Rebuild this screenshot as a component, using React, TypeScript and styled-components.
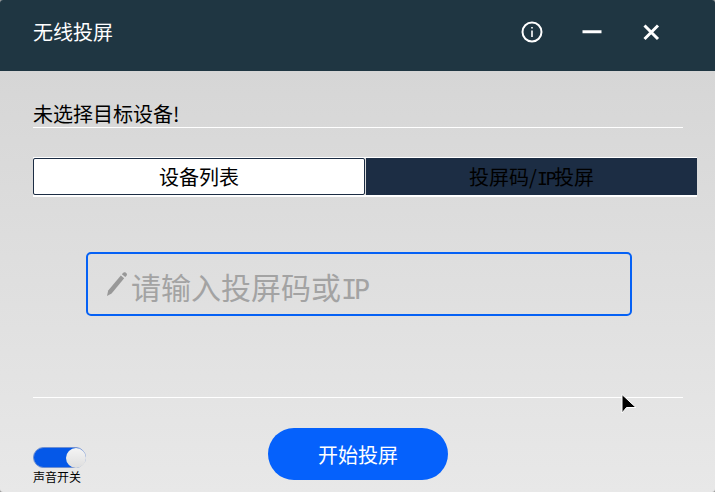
import styled, { createGlobalStyle } from 'styled-components'

const GlobalStyle = createGlobalStyle`
  html, body {
    margin: 0;
    padding: 0;
    background: #9a9a9a;
  }
  #root {
    width: 715px;
    height: 492px;
    overflow: hidden;
  }
`

const FONT = `"Noto Sans CJK SC", "Noto Sans", sans-serif`

const Window = styled.div`
  position: relative;
  display: flex;
  flex-direction: column;
  width: 715px;
  height: 492px;
  border-radius: 3px;
  overflow: hidden;
  background: linear-gradient(180deg, #d3d3d3 0%, #e8e8e8 100%);
  font-family: ${FONT};
  color: #000;
`

const TitleBar = styled.div`
  display: flex;
  align-items: center;
  justify-content: space-between;
  flex: none;
  height: 71px;
  padding: 0 52px 0 33px;
  box-sizing: border-box;
  background: #1f3642;
  color: #fff;
`

const TitleText = styled.div`
  font-size: 20px;
  line-height: 64px;
  margin-top: -7px;
`

const TitleButtons = styled.div`
  display: flex;
  align-items: center;
  gap: 38px;
  margin-top: -7px;
`

const IconButton = styled.div`
  display: flex;
  align-items: center;
  justify-content: center;
  width: 22px;
  height: 22px;
`

const Content = styled.div`
  display: flex;
  flex-direction: column;
  flex: 1;
  padding: 0 32px 0 33px;
`

const Status = styled.div`
  width: 650px;
  height: 57px;
  margin-bottom: 29px;
  box-sizing: border-box;
  border-bottom: 1px solid #fff;
  font-size: 20px;
  line-height: 28px;
  padding-top: 29px;
`

const Tabs = styled.div`
  display: flex;
  width: 664px;
  height: 40px;
  box-sizing: border-box;
  border-bottom: 2px solid #fff;
  border-top: 1px solid #fff;
`

const Tab = styled.div<{ $active?: boolean }>`
  display: flex;
  align-items: center;
  justify-content: center;
  box-sizing: border-box;
  font-size: 20px;
  width: ${(props) => (props.$active ? '332px' : '331px')};
  margin-left: ${(props) => (props.$active ? '0' : '1px')};
  background: ${(props) => (props.$active ? '#fff' : '#1c2d44')};
  color: #000;
  border: ${(props) => (props.$active ? '1px solid #1c2d44' : 'none')};
  border-radius: ${(props) => (props.$active ? '2px' : '0')};
`

const InputRow = styled.div`
  display: flex;
  align-items: center;
  width: 546px;
  height: 64px;
  margin: 55px 0 81px 53px;
  padding-left: 18px;
  box-sizing: border-box;
  border: 2px solid #0561f5;
  border-radius: 5px;
`

const Placeholder = styled.span`
  margin: 8px 0 0 3px;
  font-size: 30px;
  line-height: 36px;
  color: #a3a3a3;
`

const LatinText = styled.span`
  font-family: "DejaVu Sans Mono", monospace;
  font-size: 0.9em;
  letter-spacing: -0.13em;
`

const Divider = styled.div`
  width: 650px;
  height: 1px;
  background: #fff;
`

const Footer = styled.div`
  display: flex;
  align-items: flex-start;
  padding-top: 30px;
`

const SoundToggle = styled.div`
  display: flex;
  flex-direction: column;
  width: 235px;
  padding-top: 19px;
`

const SwitchTrack = styled.div`
  display: flex;
  justify-content: flex-end;
  align-items: center;
  width: 53px;
  height: 21px;
  box-sizing: border-box;
  border-radius: 11px;
  background: #0558e8;
  border: 1px solid #6f8fd0;
`

const SwitchKnob = styled.div`
  flex: none;
  width: 20px;
  height: 20px;
  margin-right: -1px;
  border-radius: 50%;
  background: linear-gradient(180deg, #f4f4f4, #dedede);
`

const SwitchLabel = styled.div`
  font-size: 12px;
  line-height: 17px;
`

const StartButton = styled.button`
  width: 180px;
  height: 52px;
  padding: 0;
  border: none;
  border-radius: 26px;
  background: #0561fc;
  color: #fff;
  font-family: ${FONT};
  font-size: 20px;
`

const Cursor = styled.svg`
  position: absolute;
  left: 621px;
  top: 394px;
`

export default function App() {
  return (
    <Window>
      <GlobalStyle />
      <TitleBar>
        <TitleText>无线投屏</TitleText>
        <TitleButtons>
          <IconButton>
            <svg width="22" height="22" viewBox="0 0 22 22" fill="none" stroke="#fff">
              <circle cx="11" cy="11" r="9.5" strokeWidth="2" />
              <path d="M11 9.5V16" strokeWidth="1.6" />
              <path d="M11 6V7.6" strokeWidth="1.6" />
            </svg>
          </IconButton>
          <IconButton>
            <svg width="22" height="22" viewBox="0 0 22 22" fill="none" stroke="#fff">
              <path d="M1.5 10.8H20.5" strokeWidth="3" />
            </svg>
          </IconButton>
          <IconButton>
            <svg width="22" height="22" viewBox="0 0 22 22" fill="none" stroke="#fff">
              <path d="M3.5 4.5L17 18M17 4.5L3.5 18" strokeWidth="3" />
            </svg>
          </IconButton>
        </TitleButtons>
      </TitleBar>
      <Content>
        <Status>未选择目标设备!</Status>
        <Tabs>
          <Tab $active>设备列表</Tab>
          <Tab>
            <span>
              投屏码/<LatinText>IP</LatinText>投屏
            </span>
          </Tab>
        </Tabs>
        <InputRow>
          <svg width="22" height="26" viewBox="0 0 22 26" fill="#989898">
            <path d="M1 25L2.2 19.5L14.8 4.5L18.2 7.3L5.6 22.4Z" />
            <path d="M15.8 3.3L17 1.9C17.8 1 18.8 1 19.6 1.6L20.4 2.3C21.2 3 21.2 4 20.5 4.8L19.3 6.1Z" />
          </svg>
          <Placeholder>
            请输入投屏码或<LatinText>IP</LatinText>
          </Placeholder>
        </InputRow>
        <Divider />
        <Footer>
          <SoundToggle>
            <SwitchTrack>
              <SwitchKnob />
            </SwitchTrack>
            <SwitchLabel>声音开关</SwitchLabel>
          </SoundToggle>
          <StartButton>开始投屏</StartButton>
        </Footer>
      </Content>
      <Cursor width="16" height="22" viewBox="0 0 16 22">
        <path d="M1 0.5V19L5.5 13.5L15 13.5Z" fill="#000" stroke="#fff" strokeWidth="1" />
      </Cursor>
    </Window>
  )
}
